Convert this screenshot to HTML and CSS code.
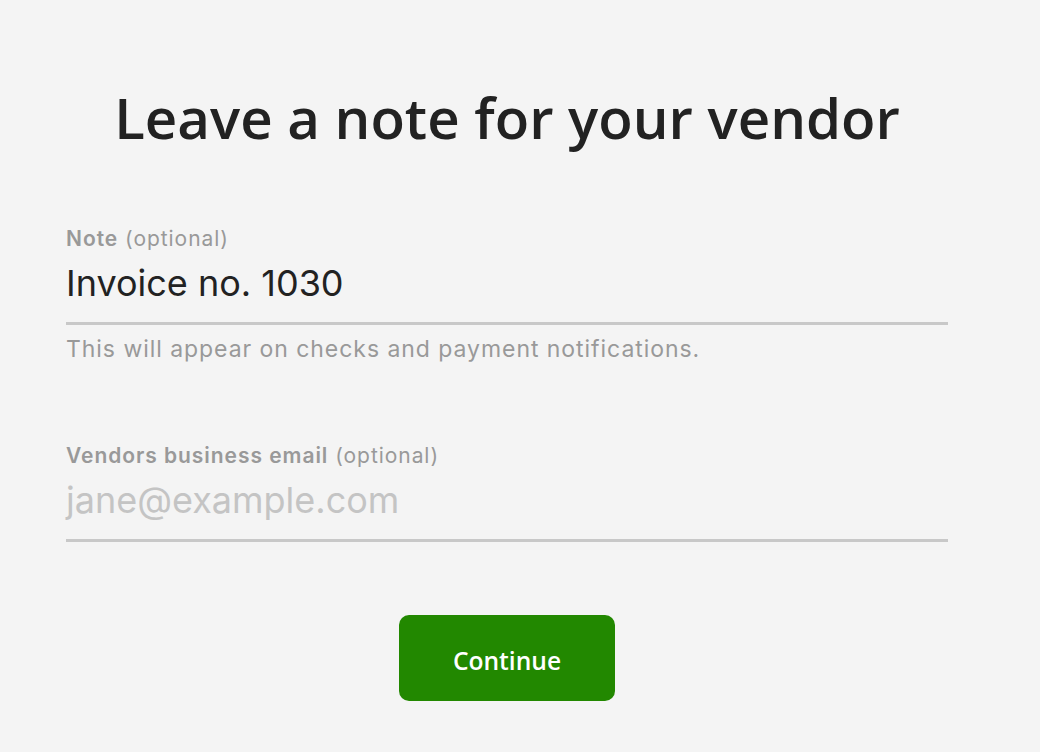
FILE: index.html
```html
<!DOCTYPE html>
<html>
<head>
<meta charset="utf-8">
<link rel="stylesheet" href="styles.css">
</head>
<body>
<main class="page">
  <h1 class="title">Leave a note for your vendor</h1>
  <div class="field">
    <label class="label"><b>Note</b> (optional)</label>
    <div class="input">Invoice no. 1030</div>
    <p class="help">This will appear on checks and payment notifications.</p>
  </div>
  <div class="field field-2">
    <label class="label"><b>Vendors business email</b> (optional)</label>
    <div class="input placeholder">jane@example.com</div>
  </div>
  <div class="actions">
    <button class="btn">Continue</button>
  </div>
</main>
</body>
</html>
```

FILE: styles.css
```css
html, body {
  margin: 0;
  padding: 0;
  background: #f4f4f4;
}
body {
  width: 1040px;
  height: 752px;
  overflow: hidden;
}
.page {
  width: 882px;
  margin-left: 66px;
  padding-top: 78px;
  display: flex;
  flex-direction: column;
}
.title {
  margin: 0;
  text-align: center;
  font-family: "Open Sans", sans-serif;
  font-weight: 600;
  font-size: 56.4px;
  line-height: 80px;
  color: #222;
}
.field {
  margin-top: 68px;
  font-family: Inter, sans-serif;
}
.field-2 {
  margin-top: 80px;
}
.label {
  display: block;
  font-size: 21px;
  line-height: 26px;
  letter-spacing: 0.95px;
  color: #999;
}
.label b {
  font-weight: 600;
}
.input {
  font-size: 36px;
  line-height: 44px;
  color: #222;
  padding: 9px 0 17px;
  border-bottom: 3px solid #c8c8c8;
}
.placeholder {
  color: #c4c4c4;
}
.help {
  margin: 10px 0 0;
  font-size: 23px;
  line-height: 28px;
  letter-spacing: 0.95px;
  color: #999;
}
.actions {
  display: flex;
  justify-content: center;
  margin-top: 73px;
}
.btn {
  width: 216px;
  height: 86px;
  border: none;
  border-radius: 10px;
  background: #228800;
  color: #fff;
  font-family: "Open Sans", sans-serif;
  font-weight: 600;
  font-size: 24.6px;
  padding: 4px 0 0;
}
```
